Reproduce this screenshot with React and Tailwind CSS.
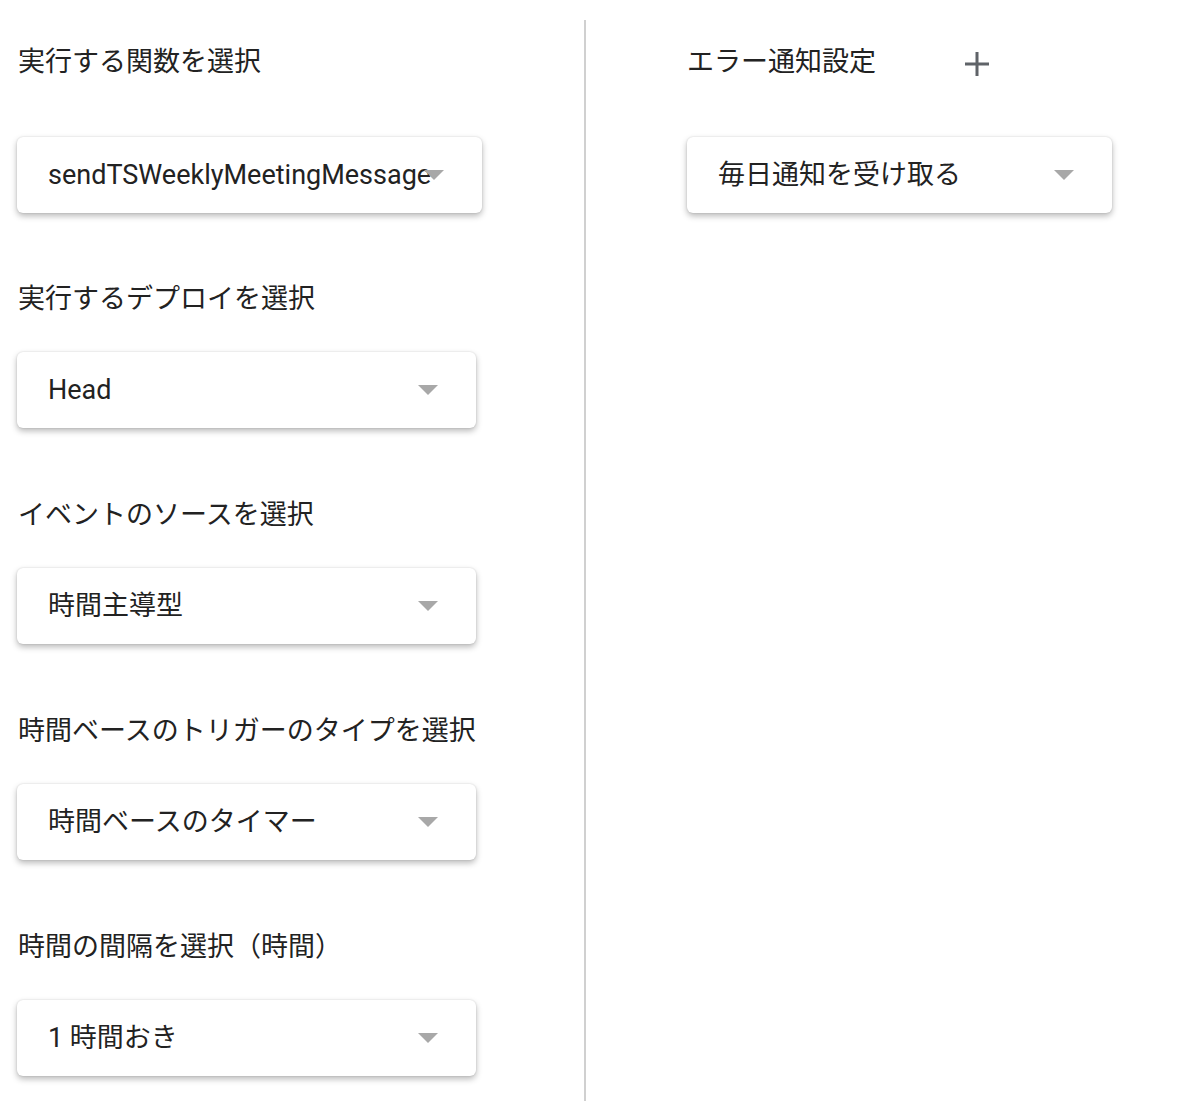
import React from "react";

function Arrow() {
  return (
    <svg
      width="20"
      height="10"
      viewBox="0 0 20 10"
      className="absolute right-[38px] top-1/2 -translate-y-1/2"
    >
      <path d="M0 0 L20 0 L10 10 Z" fill="#a8a8a8" />
    </svg>
  );
}

function Select({ text, w, mt }) {
  return (
    <div
      className={`relative h-[76px] ${w} ${mt} rounded-[6px] bg-white shadow-[0_3px_6px_rgba(0,0,0,0.28),0_0_2px_rgba(0,0,0,0.14)] flex items-center pl-[31px] text-[27px] text-[#222222] whitespace-nowrap`}
    >
      <span>{text}</span>
      <Arrow />
    </div>
  );
}

function Label({ text, mt }) {
  return (
    <div className={`h-[36px] leading-[36px] text-[27px] text-[#222222] ${mt}`}>{text}</div>
  );
}

export default function App() {
  return (
    <div
      className="flex w-[1200px] h-[1101px] bg-white overflow-hidden"
      style={{ fontFamily: "Roboto, 'Noto Sans CJK JP', sans-serif" }}
    >
      <div className="w-[584px] shrink-0 pl-[17px] pt-[44px] flex flex-col">
        <Label text="実行する関数を選択" mt="ml-px" />
        <Select text="sendTSWeeklyMeetingMessage" w="w-[465px]" mt="mt-[57px]" />
        <Label text="実行するデプロイを選択" mt="mt-[68px] ml-px" />
        <Select text="Head" w="w-[459px]" mt="mt-[35px]" />
        <Label text="イベントのソースを選択" mt="mt-[69px] ml-px" />
        <Select text="時間主導型" w="w-[459px]" mt="mt-[35px]" />
        <Label text="時間ベースのトリガーのタイプを選択" mt="mt-[69px] ml-px" />
        <Select text="時間ベースのタイマー" w="w-[459px]" mt="mt-[35px]" />
        <Label text="時間の間隔を選択（時間）" mt="mt-[69px] ml-px" />
        <Select text="1 時間おき" w="w-[459px]" mt="mt-[35px]" />
      </div>
      <div className="w-[2px] bg-[#d0d0d0] mt-[20px] self-stretch shrink-0" />
      <div className="pl-[101px] pt-[44px] flex flex-col">
        <div className="flex items-center h-[36px]">
          <span className="text-[27px] leading-[36px] text-[#222222]">エラー通知設定</span>
          <svg width="26" height="26" viewBox="0 0 26 26" className="ml-[88px] mt-[4px]">
            <path d="M13 1 V25 M1 13 H25" stroke="#5f6368" strokeWidth="3" />
          </svg>
        </div>
        <Select text="毎日通知を受け取る" w="w-[425px]" mt="mt-[57px]" />
      </div>
    </div>
  );
}
